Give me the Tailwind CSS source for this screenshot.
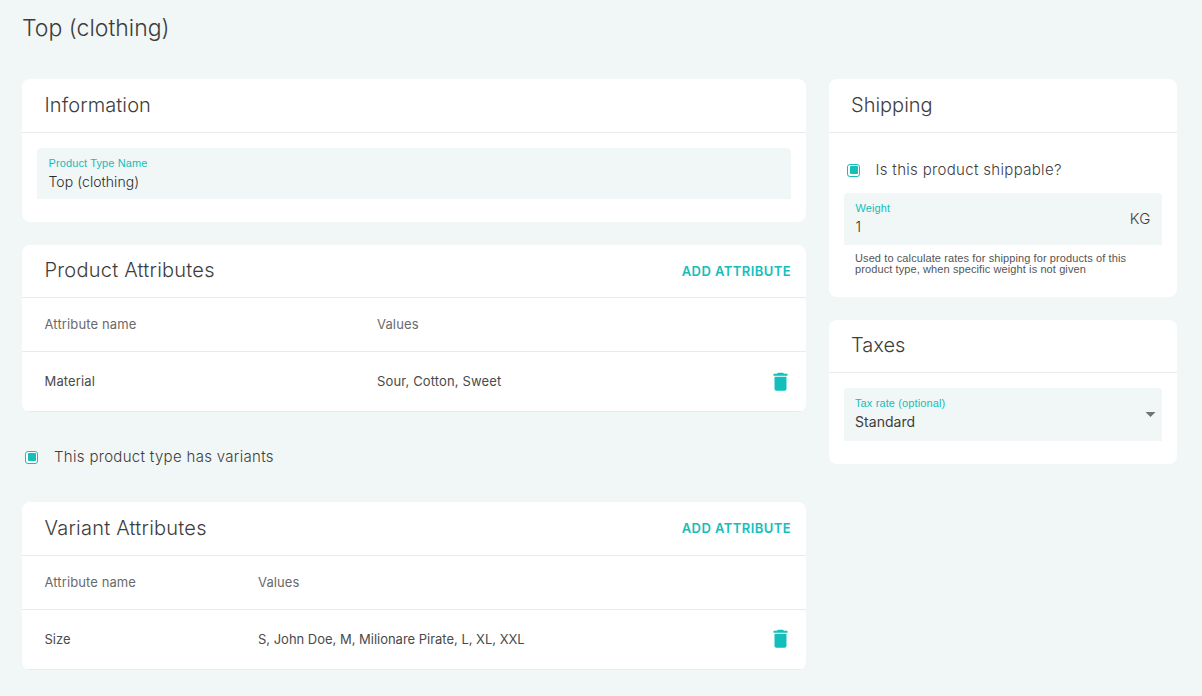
<!DOCTYPE html>
<html lang="en">
<head>
<meta charset="utf-8">
<title>Top (clothing)</title>
<script src="https://cdn.jsdelivr.net/npm/@tailwindcss/browser@4"></script>
</head>
<body class="h-[696px] overflow-hidden bg-[#f1f6f6] font-['Inter',sans-serif] text-[#3d3d3d]">
<main class="pl-[22px] pr-[25px] pt-[10px]">
  <h1 class="h-[69px] text-[23px] leading-9 font-light whitespace-nowrap">Top (clothing)</h1>
  <div class="flex items-start gap-[23px]">
    <div class="w-[784px]">
      <section class="h-[143px] rounded-lg bg-white">
        <header class="flex h-[54px] items-center border-b border-[#eaeaea] px-[22.5px] pb-[2px]">
          <h2 class="text-[20px] font-light tracking-[0.1px]">Information</h2>
        </header>
        <div class="mx-[15px] mt-[15px] h-[51px] rounded-t bg-[#f1f6f6] px-[11.5px] pt-[9px]">
          <div class="font-['Liberation_Sans',sans-serif] text-[11px] leading-[13px] tracking-[0.12px] text-[#13bebb]">Product Type Name</div>
          <div class="mt-[2px] text-[14px] leading-5 font-light tracking-[0.06px] text-[#2b2b2b]">Top (clothing)</div>
        </div>
      </section>

      <section class="mt-[23px] h-[167px] overflow-hidden rounded-lg bg-white">
        <header class="flex h-[53px] items-center justify-between border-b border-[#eaeaea] pl-[22.5px] pr-[15px]">
          <h2 class="pb-[2px] text-[20px] font-light tracking-[0.23px]">Product Attributes</h2>
          <button class="pt-px text-[13px] font-semibold tracking-[0.43px] text-[#13bebb]">ADD ATTRIBUTE</button>
        </header>
        <div class="grid h-[54px] grid-cols-[332.5px_1fr] items-center border-b border-[#eaeaea] pl-[22.5px] text-[13px] tracking-[0.13px] text-[#6a6a6a]">
          <span>Attribute name</span><span>Values</span>
        </div>
        <div class="grid h-[60px] grid-cols-[332.5px_1fr_auto] items-center border-b border-[#eaeaea] pl-[22.5px] pr-[14px] text-[13px] tracking-[0.14px] text-[#4a4a4a]">
          <span>Material</span><span>Sour, Cotton, Sweet</span>
          <svg class="size-[24px]" viewBox="-0.5 0.2 24 24" fill="#13bebb"><path d="M6 19c0 1.100.9 2 2 2h8c1.100 0 2-.9 2-2V7H6v12zM19 4h-3.500l-1-1h-5l-1 1H5v2h14V4z"/></svg>
        </div>
      </section>

      <label class="flex h-[90px] items-center pl-[3px]">
        <span class="size-[13px] rounded-[3px] border border-[#13bebb] bg-white pt-px pl-[2px]"><span class="block size-2 rounded-[1px] bg-[#13bebb]"></span></span>
        <span class="ml-[16px] text-[15px] font-light tracking-[0.31px]">This product type has variants</span>
      </label>

      <section class="h-[168px] overflow-hidden rounded-lg bg-white">
        <header class="flex h-[54px] items-center justify-between border-b border-[#eaeaea] pl-[22.5px] pr-[15px]">
          <h2 class="pb-[2px] text-[20px] font-light tracking-[0.23px]">Variant Attributes</h2>
          <button class="text-[13px] font-semibold tracking-[0.43px] text-[#13bebb]">ADD ATTRIBUTE</button>
        </header>
        <div class="grid h-[54px] grid-cols-[213.5px_1fr] items-center border-b border-[#eaeaea] pl-[22.5px] text-[13px] tracking-[0.1px] text-[#6a6a6a]">
          <span>Attribute name</span><span>Values</span>
        </div>
        <div class="grid h-[60px] grid-cols-[213.5px_1fr_auto] items-center border-b border-[#eaeaea] pl-[22.5px] pr-[14px] text-[13px] text-[#4a4a4a]">
          <span>Size</span><span class="tracking-[-0.015px]">S, John Doe, M, Milionare Pirate, L, XL, XXL</span>
          <svg class="mb-px size-[24px]" viewBox="-0.5 0.2 24 24" fill="#13bebb"><path d="M6 19c0 1.100.9 2 2 2h8c1.100 0 2-.9 2-2V7H6v12zM19 4h-3.500l-1-1h-5l-1 1H5v2h14V4z"/></svg>
        </div>
      </section>
    </div>

    <div class="w-[348px]">
      <section class="h-[218px] rounded-lg bg-white">
        <header class="flex h-[54px] items-center border-b border-[#eaeaea] px-[22px] pb-[2px]">
          <h2 class="text-[20px] font-light">Shipping</h2>
        </header>
        <label class="flex h-[60px] items-center pt-[15px] pl-[18px]">
          <span class="size-[13px] rounded-[3px] border border-[#13bebb] bg-white pt-px pl-[2px]"><span class="block size-2 rounded-[1px] bg-[#13bebb]"></span></span>
          <span class="ml-[15.5px] text-[15px] font-light tracking-[0.32px]">Is this product shippable?</span>
        </label>
        <div class="mx-[15px] flex h-[52px] items-center justify-between rounded-t bg-[#f1f6f6] pr-[11px] pl-[11.5px]">
          <div>
            <div class="font-['Liberation_Sans',sans-serif] text-[11px] leading-[13px] tracking-[0.12px] text-[#13bebb]">Weight</div>
            <div class="mt-[2px] text-[14px] leading-5 font-light text-[#2b2b2b]">1</div>
          </div>
          <div class="text-[15px] font-light tracking-[0.5px]">KG</div>
        </div>
        <p class="mt-2 ml-[26px] font-['Liberation_Sans',sans-serif] text-[11px] leading-[11px] tracking-[0.1px] whitespace-nowrap text-[#555]">Used to calculate rates for shipping for products of this<br>product type, when specific weight is not given</p>
      </section>

      <section class="mt-[23px] h-[144px] rounded-lg bg-white">
        <header class="flex h-[53px] items-center border-b border-[#eaeaea] px-[22px] pb-[2px]">
          <h2 class="text-[20px] font-light">Taxes</h2>
        </header>
        <div class="mx-[15px] mt-[15px] flex h-[53px] items-center justify-between rounded-t bg-[#f1f6f6] pr-[7px] pl-[11px]">
          <div>
            <div class="font-['Liberation_Sans',sans-serif] text-[11px] leading-[13px] tracking-[0.12px] text-[#13bebb]">Tax rate (optional)</div>
            <div class="mt-[2px] text-[14px] leading-5 tracking-[0.05px]">Standard</div>
          </div>
          <svg class="h-[5px] w-[10px] overflow-visible" viewBox="-0.5 0 10 5" fill="#6f7474"><path d="M0 0h10L5 5z"/></svg>
        </div>
      </section>
    </div>
  </div>
</main>
</body>
</html>
